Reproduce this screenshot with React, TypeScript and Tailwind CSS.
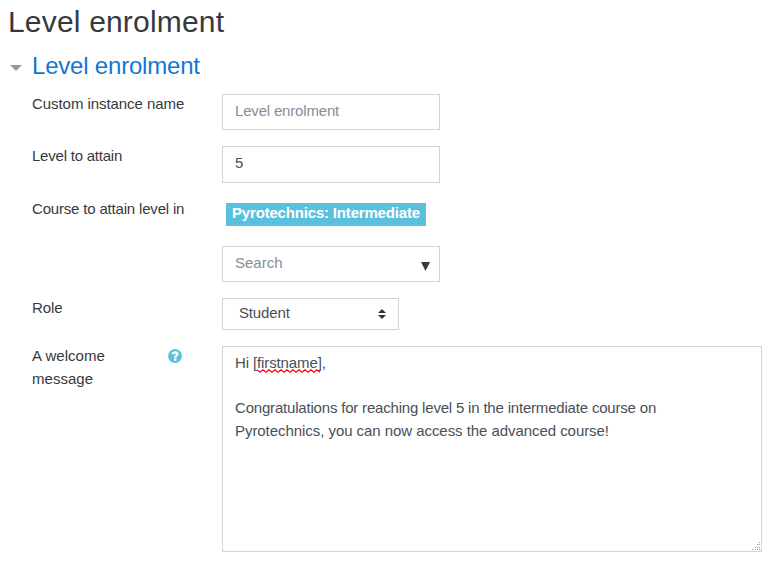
import type { ReactNode } from 'react';

function Row({ label, help, top, tracking = '', children }: { label?: string; help?: boolean; top: string; tracking?: string; children: ReactNode }) {
  return (
    <div className={`flex pl-8 ${top}`}>
      <div className="-mt-px flex w-[190px] shrink-0 justify-between pr-10">
        <span className={`${help ? 'w-[100px]' : 'whitespace-nowrap'} ${tracking}`}>{label}</span>
        {help && (
          <svg className="mt-[4px] h-[14px] w-[14px]" viewBox="0 0 14 14">
            <circle cx="7" cy="7" r="6.9" fill="#5bc0de" />
            <path d="M4.5 5.200C4.900 3.900 5.700 3.400 7 3.400c1.400 0 2.300.8 2.300 1.900 0 1.600-2.100 1.600-2.100 3.200" fill="none" stroke="white" strokeWidth="2.400" />
            <path d="M6 9.400h2.400v2.300H6z" fill="white" />
          </svg>
        )}
      </div>
      {children}
    </div>
  );
}

export default function App() {
  return (
    <main className="h-[562px] w-[771px] overflow-hidden bg-white font-['Liberation_Sans',Arial,sans-serif] text-[15px] leading-[22.5px] text-[#373a3c]">
      <h1 className="h-11 pl-2 pt-[5px] text-[30px] leading-[33px] tracking-[0.18px]">Level enrolment</h1>
      <h2 className="flex h-[50px] pl-[10px] text-2xl leading-[44px] tracking-[-0.2px] text-[#1177d1]">
        <svg className="mr-[10px] mt-[21px] h-[6px] w-3" viewBox="0 0 12 6"><path d="M0 0h12L6 6z" fill="#999" /></svg>
        Level enrolment
      </h2>
      <Row label="Custom instance name" top="pt-0" tracking="tracking-[-0.06px]">
        <input className="h-9 w-[218px] border border-[#ced4da] px-3 pb-1 tracking-[-0.18px] outline-none placeholder:text-[#868e96]" placeholder="Level enrolment" />
      </Row>
      <Row label="Level to attain" top="pt-4" tracking="tracking-[-0.22px]">
        <input className="h-[37px] w-[218px] border border-[#ced4da] px-3 pb-1 text-[#495057] outline-none" defaultValue="5" />
      </Row>
      <Row label="Course to attain level in" top="pt-4" tracking="tracking-[-0.18px]">
        <div className="h-[47px] pl-1 pt-1"><span className="block h-[23px] w-[200px] whitespace-nowrap bg-[#5bc0de] px-[6px] font-bold leading-[20px] tracking-[-0.18px] text-white">Pyrotechnics: Intermediate</span></div>
      </Row>
      <Row top="pt-0">
        <div className="flex h-9 w-[218px] justify-between border border-[#ced4da] pl-3 pr-[9px] leading-[32px] text-[#868e96]">
          <span>Search</span>
          <svg className="mt-[15px] h-[9px] w-[9px]" viewBox="0 0 9 9"><path d="M0 0h9L4.500 9z" fill="#373a3c" /></svg>
        </div>
      </Row>
      <Row label="Role" top="pt-4" tracking="tracking-[-0.1px]">
        <div className="flex h-8 w-[177px] items-start justify-between border border-[#ced4da] pl-4 pr-3 leading-[28px] text-[#495057]">
          <span className="tracking-[-0.15px]">Student</span>
          <svg className="mt-[10px] h-[10px] w-2" viewBox="0 0 8 10"><path d="M0 4L4 0l4 4zM0 6h8L4 10z" fill="#333" /></svg>
        </div>
      </Row>
      <Row label="A welcome message" help top="pt-4" tracking="tracking-[0.03px]">
        <div className="relative h-[206px] w-[540px] whitespace-nowrap border border-[#ced4da] px-3 pt-[5px] text-[#495057]">
          <p className="tracking-[-0.12px]">
            Hi [<span className="relative">firstname
              <svg className="absolute left-0 top-[15px] h-1 w-[63px]" viewBox="0 0 63 4">
                <path d="M0 .8l3 2.400L6 .8l3 2.400L12 .8l3 2.400L18 .8l3 2.400L24 .8l3 2.400L30 .8l3 2.400L36 .8l3 2.400L42 .8l3 2.400L48 .8l3 2.400L54 .8l3 2.400L60 .8l3 2.400" fill="none" stroke="red" strokeWidth="1.200" />
              </svg>
            </span>],
          </p>
          <p className="h-[22.5px]" />
          <p className="tracking-[-0.19px]">Congratulations for reaching level 5 in the intermediate course on</p>
          <p className="tracking-[-0.055px]">Pyrotechnics, you can now access the advanced course!</p>
          <svg className="absolute bottom-0 right-0 h-[10px] w-[10px]" viewBox="0 0 10 10" shapeRendering="crispEdges">
            <path d="M8 1h1v1H8zM6 3h1v1H6zM8 3h1v1H8zM4 6h1v1H4zM6 6h1v1H6zM8 6h1v1H8zM1 8h1v1H1zM4 8h1v1H4zM6 8h1v1H6zM8 8h1v1H8z" fill="#999" />
          </svg>
        </div>
      </Row>
    </main>
  );
}
